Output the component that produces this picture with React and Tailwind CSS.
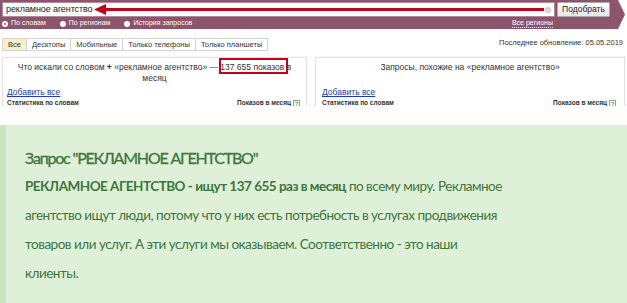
import React from 'react'

const tabs = ['Все', 'Десктопы', 'Мобильные', 'Только телефоны', 'Только планшеты']

function Radio({ label, checked }) {
    return (
        <div className="flex items-center gap-[3px]">
            <span className="w-[6px] h-[6px] rounded-full bg-white flex items-center justify-center">
                {checked && <span className="w-[2px] h-[2px] rounded-full bg-[#8e546c]"></span>}
            </span>
            <span>{label}</span>
        </div>
    )
}

function Panel({ children, width }) {
    return (
        <div className={`${width} h-[60px] border border-[#e3e3e3] shadow-[0_0_2px_rgba(0,0,0,0.08)] px-[4px] pt-[4px] text-[#333]`}>
            {children}
        </div>
    )
}

function Help() {
    return (
        <span className="inline-block w-[7px] h-[7px] border border-[#7bb86f] text-[6px] leading-[6px] text-center text-[#5a9a4d] ml-[2px] align-middle">?</span>
    )
}

export default function App() {
    return (
        <div className="w-[627px] h-[303px] bg-white overflow-hidden">
            {/* screenshot of wordstat */}
            <div className="h-[106px] overflow-hidden relative" style={{ fontFamily: '"Liberation Sans", Arial, sans-serif' }}>
                <div className="flex h-[29px]">
                    <div className="w-[617px] bg-[#8e546c] pl-[2px] pt-[2px]">
                        <div className="flex gap-[2px]">
                            <div className="w-[553px] h-[15px] bg-white border border-[#b08a9a] flex items-center justify-between px-[3px]">
                                <span className="text-[9px] tracking-[-0.1px] text-[#222]">рекламное агентство</span>
                                <span className="w-[6px] h-[6px] rounded-full bg-[#ccc] text-white text-[5px] leading-[6px] text-center">×</span>
                            </div>
                            <div className="w-[53px] h-[15px] bg-gradient-to-b from-white to-[#e6e6e6] border border-[#aaa] rounded-[1px] text-[8.5px] text-[#222] flex items-center justify-center">
                                Подобрать
                            </div>
                        </div>
                        <div className="flex items-center text-[7px] text-white mt-[2px] h-[9px]">
                            <div className="flex gap-[14px]">
                                <Radio label="По словам" checked />
                                <Radio label="По регионам" />
                                <Radio label="История запросов" />
                            </div>
                            <span className="ml-auto mr-[64px] border-b border-dotted border-white leading-[8px]">Все регионы</span>
                        </div>
                    </div>
                    <svg width="10" height="29" viewBox="0 0 10 29">
                        <polygon points="0,0 1,0 8,14.5 1,29 0,29" fill="#8e546c" />
                    </svg>
                </div>

                {/* red arrow */}
                <svg className="absolute left-[94px] top-[3px]" width="452" height="13" viewBox="0 0 452 13">
                    <line x1="8" y1="6.5" x2="450" y2="6.5" stroke="#c4001f" strokeWidth="3" />
                    <polygon points="0,6.5 12,1 12,12" fill="#c4001f" />
                </svg>

                <div className="flex items-end justify-between px-[2px] mt-[8px]">
                    <div className="flex">
                        {tabs.map((t, i) => (
                            <div key={t} className={`h-[13px] px-[5px] border border-[#d4d4d4] -ml-px first:ml-0 text-[7.5px] text-[#333] flex items-center ${i === 0 ? 'bg-[#fcefc2]' : 'bg-white'}`}>
                                {t}
                            </div>
                        ))}
                    </div>
                    <span className="text-[7.5px] text-[#333] mr-[2px] mb-[3px]">Последнее обновление: 05.05.2019</span>
                </div>

                <div className="flex gap-[8px] px-[2px] mt-[6px]">
                    <Panel width="w-[305px]">
                        <p className="text-[8.5px] text-center leading-[11px] px-[8px]">
                            Что искали со словом <b>+</b> «рекламное агентство» — 137 655 показов в месяц
                        </p>
                        <a className="block mt-[3px] text-[8.5px] text-[#1a3cc0] underline leading-[10px]">Добавить все</a>
                        <div className="flex justify-between text-[6.5px] font-bold mt-[2px] pr-[2px] leading-[8px]">
                            <span>Статистика по словам</span>
                            <span>Показов в месяц<Help /></span>
                        </div>
                    </Panel>
                    <Panel width="w-[310px]">
                        <p className="text-[8.5px] text-center leading-[11px]">Запросы, похожие на «рекламное агентство»</p>
                        <a className="block mt-[14px] text-[8.5px] text-[#1a3cc0] underline leading-[10px] pl-[2px]">Добавить все</a>
                        <div className="flex justify-between text-[6.5px] font-bold mt-[2px] pl-[2px] pr-[4px] leading-[8px]">
                            <span>Статистика по словам</span>
                            <span>Показов в месяц<Help /></span>
                        </div>
                    </Panel>
                </div>

                {/* highlight box */}
                <div className="absolute left-[219px] top-[58px] w-[69px] h-[16px] border-2 border-[#c4001f]"></div>
            </div>

            {/* green note */}
            <div className="mt-[19px] h-[178px] flex bg-[#dff0d8]" style={{ fontFamily: 'Lato, sans-serif' }}>
                <div className="w-[6px] bg-[#c9e6be]"></div>
                <div className="pl-[19px] pt-[21px] text-[#3c763d]">
                    <h2 className="text-[16px] leading-[24px] tracking-[-1.2px] [-webkit-text-stroke:0.3px_#3c763d]">Запрос "РЕКЛАМНОЕ АГЕНТСТВО"</h2>
                    <p className="text-[13.5px] leading-[29px] mt-[2px] tracking-[-0.5px]">
                        <b className="font-bold">РЕКЛАМНОЕ АГЕНТСТВО - ищут 137 655 раз в месяц</b> по всему миру. Рекламное<br />
                        агентство ищут люди, потому что у них есть потребность в услугах продвижения<br />
                        товаров или услуг. А эти услуги мы оказываем. Соответственно - это наши<br />
                        клиенты.
                    </p>
                </div>
            </div>
        </div>
    )
}
